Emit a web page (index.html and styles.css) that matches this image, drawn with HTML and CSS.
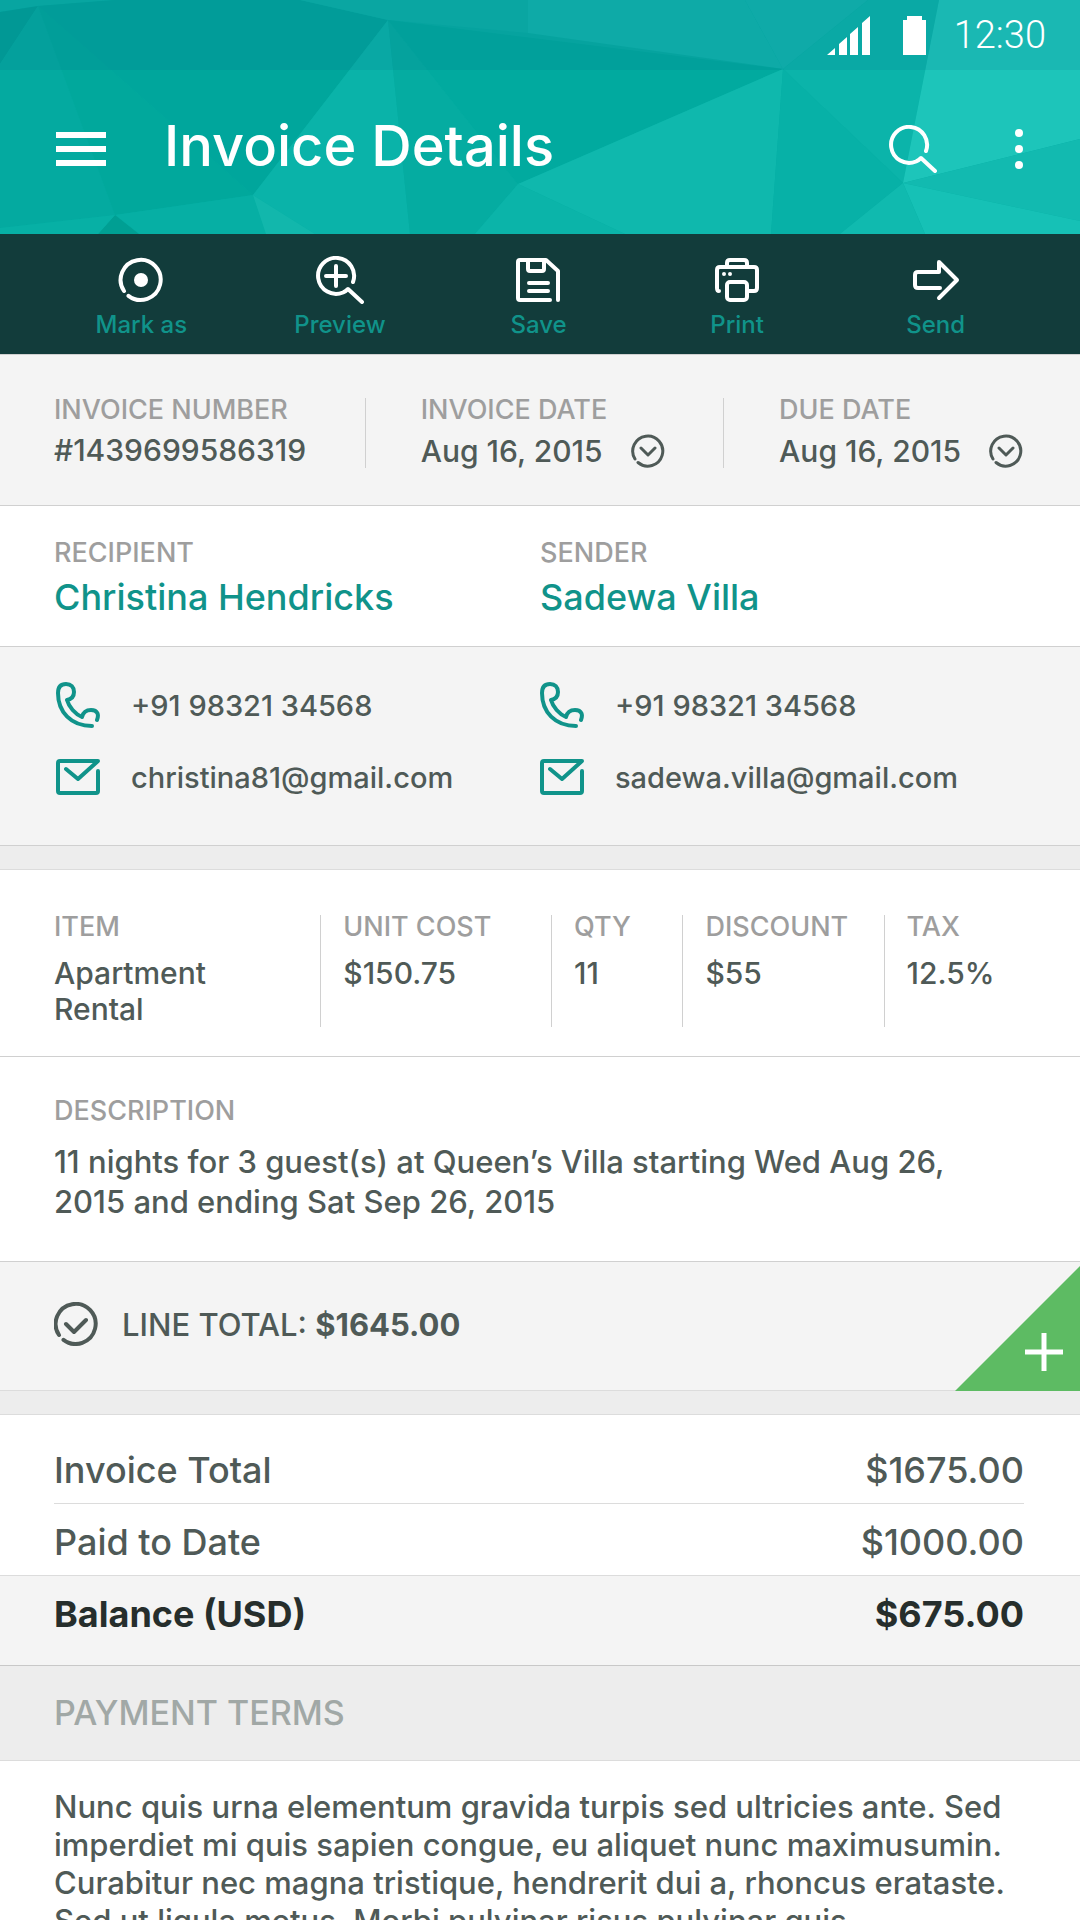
FILE: index.html
```html
<!DOCTYPE html>
<html lang="en">
<head>
  <meta charset="UTF-8" />
  <meta name="viewport" content="width=device-width, initial-scale=1.0"/>
  <title>Invoice Details</title>
  <link rel="stylesheet" href="styles.css">
</head>
<body>

<!-- shared icons -->
<svg class="sprite" aria-hidden="true">
  <symbol id="i-phone" viewBox="0 0 44 46">
    <path d="M41 38C43 33 42 28 35 28C30 28 27 31 26 35C19 32 13 25 11 18C16 17 18 14 18 10C18 5 15 2 10 2C5 2 2 5 2 11C2 30 15 44 36 44"/>
  </symbol>
  <symbol id="i-mail" viewBox="0 0 44 36">
    <path d="M42 12V32a2 2 0 0 1-2 2H4a2 2 0 0 1-2-2V4a2 2 0 0 1 2-2H42L22 20L10 10"/>
  </symbol>
  <symbol id="i-down" viewBox="0 0 34 34">
    <path d="M4 25A15 15 0 1 1 7 28.500M10 14l7 7 7-7"/>
  </symbol>
</svg>

<div class="screen">
  <header class="header">
    <svg class="header-bg" viewBox="0 0 1080 234" preserveAspectRatio="none" aria-hidden="true">
      <rect width="1080" height="234" fill="#06aea3"/>
      <path fill="#08b0a6" d="M0 0H115L38 6L0 12z"/>
      <path fill="#00a198" d="M0 12L38 6L0 64z"/>
      <path fill="#04aaa0" d="M38 6L0 64V228L115 215z"/>
      <path fill="#01a89c" d="M38 6L115 215L253 195z"/>
      <path fill="#00a69c" d="M38 6L115 0H300L388 20L253 195z"/>
      <path fill="#0bb1a7" d="M300 0H528V33L388 20z"/>
      <path fill="#0fb5ac" d="M528 0H745L783 69L528 33z"/>
      <path fill="#0ab3a9" d="M388 20L253 195L315 234H410z"/>
      <path fill="#05aca1" d="M388 20L410 234H475L518 184z"/>
      <path fill="#01aa9f" d="M388 20L518 184L783 69z"/>
      <path fill="#0fb8ad" d="M518 184L783 69L771 234H625z"/>
      <path fill="#0bb4a9" d="M518 184L625 234H475z"/>
      <path fill="#06afa4" d="M115 215L253 195L266 234H139z"/>
      <path fill="#12b7ac" d="M253 195L266 234H315z"/>
      <path fill="#009f93" d="M115 215L98 234H139z"/>
      <path fill="#07b0a5" d="M0 228L115 215L98 234H0z"/>
      <path fill="#10b6ae" d="M745 0H868L783 69z"/>
      <path fill="#0bb4aa" d="M868 0H939L903 183L783 69z"/>
      <path fill="#07b1a7" d="M783 69L903 183L840 234H771z"/>
      <path fill="#1dc5ba" d="M939 0H1080V139L903 183z"/>
      <path fill="#12bab0" d="M903 183L1080 139V221z"/>
      <path fill="#16c1b6" d="M903 183L1080 221V234H925z"/>
      <path fill="#10baaf" d="M903 183L925 234H840z"/>
    </svg>

    <div class="status-bar">
      <svg width="43" height="39" viewBox="0 0 43 39" fill="#fff" aria-hidden="true">
        <path d="M0 39L8 32V39zM12 39V28L20 21V39zM23 39V18L31 11V39zM35 39V7L43 0V39z"/>
      </svg>
      <svg width="23" height="39" viewBox="0 0 23 39" fill="#fff" aria-hidden="true">
        <path d="M0 4H4V0H19V4H23V39H0z"/>
      </svg>
      <span class="clock">12:30</span>
    </div>

    <div class="app-bar">
      <button class="icon-btn" aria-label="Menu">
        <svg width="50" height="34" viewBox="0 0 50 34" fill="#fff">
          <path d="M0 0H50V6H0zM0 14H50V20H0zM0 28H50V34H0z"/>
        </svg>
      </button>
      <h1 class="title">Invoice Details</h1>
      <button class="icon-btn search-btn" aria-label="Search">
        <svg class="line-icon" width="48" height="48" viewBox="0 0 48 48">
          <path d="M37 26A18 18 0 1 0 27 36.500Q30 35 32 33L46 46"/>
        </svg>
      </button>
      <button class="icon-btn" aria-label="More">
        <svg width="8" height="40" viewBox="0 0 8 40" fill="#fff">
          <circle cx="4" cy="4" r="4"/><circle cx="4" cy="20" r="4"/><circle cx="4" cy="36" r="4"/>
        </svg>
      </button>
    </div>
  </header>

  <nav class="toolbar">
    <button class="tool">
      <svg class="line-icon" width="48" height="48" viewBox="-2 -2 48 48">
        <path d="M5 33A20 20 0 1 1 9.500 37.800"/>
        <circle cx="22" cy="22" r="7" fill="#fff" stroke="none"/>
      </svg>
      Mark as
    </button>
    <button class="tool">
      <svg class="line-icon" width="48" height="48" viewBox="0 0 48 48">
        <path d="M37 26A18 18 0 1 0 27 36.500Q30 35 32 33L46 46M10 20H30M20 10V30"/>
      </svg>
      Preview
    </button>
    <button class="tool">
      <svg class="line-icon" width="48" height="48" viewBox="-2 -2 48 48">
        <path d="M34 42H4a2 2 0 0 1-2-2V4a2 2 0 0 1 2-2H30L42 13V42M12 3V11a2 2 0 0 0 2 2H26a2 2 0 0 0 2-2V3M13 25H32M13 33H32"/>
      </svg>
      Save
    </button>
    <button class="tool">
      <svg class="line-icon" width="48" height="48" viewBox="-2 -2 48 48">
        <path d="M4 33Q2 33 2 30V12Q2 9 5 9H39Q42 9 42 12V30Q42 33 39 33H34M12 9V5Q12 2 15 2H29Q32 2 32 5V9"/>
        <rect x="12" y="24" width="20" height="18" rx="3"/>
        <path d="M9 16h0M15 16h0"/>
      </svg>
      Print
    </button>
    <button class="tool">
      <svg class="line-icon" width="48" height="48" viewBox="-1 -4 48 48">
        <path d="M27 28H5Q2 28 2 25V15Q2 12 5 12H26V2L44 20L26 38"/>
      </svg>
      Send
    </button>
  </nav>

  <main>
    <section class="meta">
      <div class="meta-col">
        <h2 class="label">INVOICE NUMBER</h2>
        <p class="value">#1439699586319</p>
      </div>
      <div class="meta-col">
        <h2 class="label" id="invoice-date">INVOICE DATE</h2>
        <button class="value date-btn" aria-describedby="invoice-date">
          Aug 16, 2015
          <svg class="line-icon" width="34" height="34"><use href="#i-down"/></svg>
        </button>
      </div>
      <div class="meta-col">
        <h2 class="label" id="due-date">DUE DATE</h2>
        <button class="value date-btn" aria-describedby="due-date">
          Aug 16, 2015
          <svg class="line-icon" width="34" height="34"><use href="#i-down"/></svg>
        </button>
      </div>
    </section>

    <section class="people">
      <div>
        <h2 class="label">RECIPIENT</h2>
        <a class="name" href="#recipient">Christina Hendricks</a>
      </div>
      <div>
        <h2 class="label">SENDER</h2>
        <a class="name" href="#sender">Sadewa Villa</a>
      </div>
    </section>

    <section class="contacts">
      <div class="contact-list" id="recipient">
        <a class="contact" href="tel:+919832134568">
          <svg class="line-icon" width="44" height="46"><use href="#i-phone"/></svg>
          +91 98321 34568
        </a>
        <a class="contact" href="mailto:christina81@gmail.com">
          <svg class="line-icon" width="44" height="36"><use href="#i-mail"/></svg>
          christina81@gmail.com
        </a>
      </div>
      <div class="contact-list" id="sender">
        <a class="contact" href="tel:+919832134568">
          <svg class="line-icon" width="44" height="46"><use href="#i-phone"/></svg>
          +91 98321 34568
        </a>
        <a class="contact" href="mailto:sadewa.villa@gmail.com">
          <svg class="line-icon" width="44" height="36"><use href="#i-mail"/></svg>
          sadewa.villa@gmail.com
        </a>
      </div>
    </section>

    <section class="items">
      <table class="item-table">
        <thead>
          <tr>
            <th class="label col-item" scope="col">ITEM</th>
            <th class="label col-cost" scope="col">UNIT COST</th>
            <th class="label col-qty" scope="col">QTY</th>
            <th class="label col-discount" scope="col">DISCOUNT</th>
            <th class="label" scope="col">TAX</th>
          </tr>
        </thead>
        <tbody>
          <tr>
            <td>Apartment<br>Rental</td>
            <td>$150.75</td>
            <td>11</td>
            <td>$55</td>
            <td>12.5%</td>
          </tr>
        </tbody>
      </table>
    </section>

    <section class="description">
      <h2 class="label">DESCRIPTION</h2>
      <p>11 nights for 3 guest(s) at Queen’s Villa starting Wed Aug 26,<br>2015 and ending Sat Sep 26, 2015</p>
    </section>

    <section class="line-total">
      <svg class="line-icon" width="44" height="44" viewBox="0 0 44 44" aria-hidden="true">
        <path d="M5 33A20 20 0 1 1 9.500 37.800M12 22l8 8L32 18"/>
      </svg>
      <p>LINE TOTAL: <strong>$1645.00</strong></p>
      <button class="add-btn" aria-label="Add line">
        <svg width="38" height="38" viewBox="0 0 38 38" stroke="#fff" stroke-width="5">
          <path d="M19 0V38M0 19H38"/>
        </svg>
      </button>
    </section>

    <dl class="totals">
      <div class="total-row">
        <dt>Invoice Total</dt>
        <dd>$1675.00</dd>
      </div>
      <div class="total-row">
        <dt>Paid to Date</dt>
        <dd>$1000.00</dd>
      </div>
      <div class="total-row balance">
        <dt>Balance (USD)</dt>
        <dd>$675.00</dd>
      </div>
    </dl>

    <h2 class="terms-title">PAYMENT TERMS</h2>
    <p class="terms">Nunc quis urna elementum gravida turpis sed ultricies ante. Sed<br>
      imperdiet mi quis sapien congue, eu aliquet nunc maximusumin.<br>
      Curabitur nec magna tristique, hendrerit dui a, rhoncus erataste.<br>
      Sed ut ligula metus. Morbi pulvinar risus pulvinar quis</p>
  </main>
</div>

</body>
</html>
```
FILE: styles.css
```css
:root {
  --teal: #10938a;
  --teal-dark: #123c3b;
  --text: #4f5a57;
  --muted: #9e9e9e;
  --line: #d0d0d0;
  --line-soft: #dcdcdc;
  --bg-soft: #f4f4f4;
  --bg-gap: #ededed;
  --side: 54px;
}
* {
  box-sizing: border-box;
  margin: 0;
  padding: 0;
}

body {
  font-family: Inter, "Liberation Sans", sans-serif;
  font-size: 30px;
  font-weight: 500;
  color: var(--text);
  background: #fff;
}

button {
  font: inherit;
  color: inherit;
  background: none;
  border: none;
  cursor: pointer;
}
a {
  color: inherit;
  text-decoration: none;
}
svg {
  display: block;
  flex: none;
}

.sprite {
  position: absolute;
  width: 0;
  height: 0;
}
.line-icon {
  fill: none;
  stroke: currentColor;
  stroke-width: 4;
  stroke-linecap: round;
  stroke-linejoin: round;
}

.screen {
  height: 100vh;
  overflow-y: auto;
  scrollbar-width: none;
}

/* --- Header --- */
.header {
  position: relative;
  color: #fff;
}
.header-bg {
  position: absolute;
  top: 0;
  left: 0;
  width: 100%;
  height: 100%;
}
.status-bar {
  position: relative;
  display: flex;
  align-items: center;
  justify-content: flex-end;
  height: 70px;
  padding: 0 34px;
  background: rgba(10, 90, 130, 0.12);
}
.status-bar svg + svg {
  margin-left: 33px;
}
.clock {
  margin-left: 28px;
  font-family: Roboto, sans-serif;
  font-size: 38px;
  font-weight: 300;
}
.app-bar {
  position: relative;
  display: flex;
  align-items: center;
  height: 164px;
  padding: 0 57px 6px 56px;
}
.title {
  flex: 1;
  margin-left: 58px;
  padding-bottom: 6px;
  font-size: 56px;
  font-weight: 500;
  line-height: 60px;
}
.search-btn {
  margin-right: 78px;
}

/* --- Toolbar --- */
.toolbar {
  display: grid;
  grid-template-columns: repeat(5, 1fr);
  padding: 22px 45px 16px 42px;
  background: var(--teal-dark);
}
.tool {
  display: flex;
  flex-direction: column;
  align-items: center;
  gap: 8px;
  font-size: 24px;
  line-height: 26px;
  color: var(--teal);
}
.tool svg {
  color: #fff;
}

/* --- Invoice meta --- */
.label {
  font-size: 27px;
  font-weight: 500;
  line-height: 24px;
  color: var(--muted);
}
.meta {
  display: flex;
  justify-content: space-between;
  padding: 43px 57px 37px var(--side);
  background: var(--bg-soft);
  border-top: 1px solid var(--line);
  border-bottom: 1px solid var(--line);
}
.meta-col + .meta-col {
  padding-left: 55px;
  border-left: 1px solid var(--line);
}
.value {
  margin-top: 12px;
  line-height: 32px;
}
.date-btn {
  display: flex;
  align-items: center;
  gap: 28px;
}
.date-btn svg {
  stroke-width: 3;
}

/* --- Recipient and sender --- */
.people,
.contacts {
  display: grid;
  grid-template-columns: 1fr 1fr;
  border-bottom: 1px solid var(--line);
}
.people {
  padding: 35px var(--side) 29px;
}
.name {
  display: block;
  margin-top: 12px;
  font-size: 36px;
  line-height: 40px;
  color: var(--teal);
}
.contacts {
  padding: 35px 56px 50px;
  font-size: 29px;
  background: var(--bg-soft);
}
.contact-list {
  display: grid;
  gap: 31px;
}
.contact {
  display: flex;
  align-items: center;
  gap: 31px;
}
.contact svg {
  color: var(--teal);
}

/* --- Line item --- */
/* grey gap between blocks, closed by a thin line */
.items,
.totals {
  border-top: 23px solid var(--bg-gap);
  box-shadow: inset 0 1px 0 var(--line-soft);
}
.items {
  padding: 46px 0 29px var(--side);
  border-bottom: 1px solid var(--line);
}
.item-table {
  width: 100%;
  table-layout: fixed;
  border-collapse: collapse;
  text-align: left;
}
.item-table th {
  padding-bottom: 16px;
}
.item-table td {
  line-height: 36px;
  vertical-align: top;
}
.item-table th + th,
.item-table td + td {
  padding-left: 22px;
  border-left: 1px solid var(--line);
}
.col-item { width: 26%; }
.col-cost { width: 22.5%; }
.col-qty { width: 12.8%; }
.col-discount { width: 19.6%; }

.description {
  padding: 42px var(--side) 39px;
}
.description p {
  margin-top: 19px;
  font-size: 31px;
  line-height: 40px;
  white-space: nowrap;
}

.line-total {
  position: relative;
  display: flex;
  align-items: center;
  gap: 24px;
  padding: 40px var(--side) 44px;
  font-size: 31px;
  background: var(--bg-soft);
  border-top: 1px solid var(--line);
  border-bottom: 1px solid var(--line-soft);
}
.add-btn {
  position: absolute;
  right: 0;
  bottom: -1px;
  display: flex;
  align-items: flex-end;
  justify-content: flex-end;
  width: 125px;
  height: 125px;
  padding: 0 17px 20px 0;
  background: #5dbb63;
  clip-path: polygon(100% 0, 100% 100%, 0 100%);
}

/* --- Totals --- */
.totals {
  padding-top: 18px;
  font-size: 36px;
  line-height: 44px;
}
.total-row {
  display: flex;
  justify-content: space-between;
  margin: 0 56px 0 var(--side);
  padding: 16px 0 11px;
}
.total-row + .total-row {
  border-top: 1px solid var(--line-soft);
}
.total-row.balance {
  margin: 0;
  padding: 16px 56px 29px var(--side);
  font-weight: 700;
  color: #262e2c;
  background: var(--bg-soft);
}

/* --- Payment terms --- */
.terms-title {
  padding: 25px var(--side);
  font-size: 34px;
  font-weight: 500;
  line-height: 44px;
  color: #a1a8a6;
  background: var(--bg-gap);
  border-top: 1px solid #c8c8c8;
  border-bottom: 1px solid var(--line-soft);
}
.terms {
  padding: 27px var(--side);
  font-size: 31px;
  line-height: 38px;
  white-space: nowrap;
}
```
